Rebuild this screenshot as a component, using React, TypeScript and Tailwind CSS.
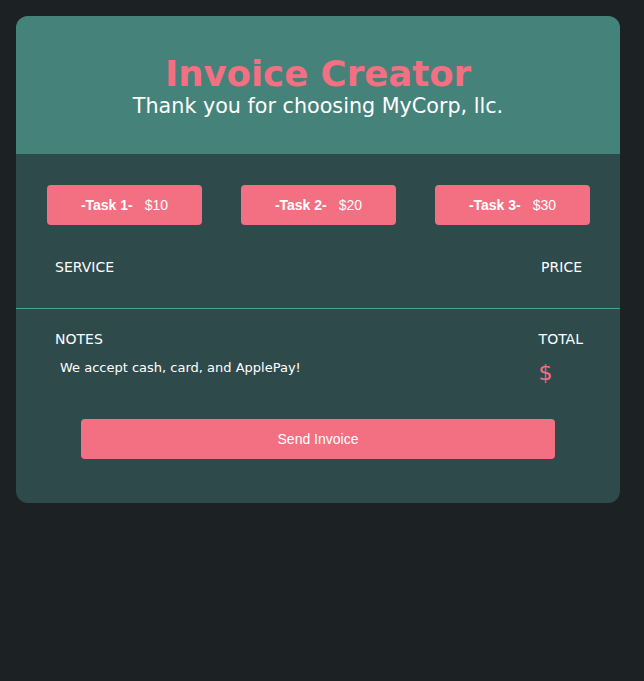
const tasks = [
  { label: "-Task 1-", price: "$10" },
  { label: "-Task 2-", price: "$20" },
  { label: "-Task 3-", price: "$30" },
];

export default function App() {
  return (
    <div className="min-h-[681px] bg-[#1c2224] p-4 font-['DejaVu_Sans',sans-serif]">
      <div className="w-[604px] overflow-hidden rounded-xl bg-[#2f4a4b]">
        <header className="flex h-[138px] flex-col items-center justify-center bg-[#45837a] pt-[2px]">
          <h1 className="text-[35.5px] leading-[40px] font-bold text-[#f27081]">Invoice Creator</h1>
          <p className="text-[20.7px] leading-6 text-white">Thank you for choosing MyCorp, llc.</p>
        </header>

        <div className="flex justify-between pr-[30px] pl-[31px] pt-[31px]">
          {tasks.map((t) => (
            <button
              key={t.label}
              className="flex h-10 w-[155px] items-center justify-center gap-3 rounded bg-[#f27081] font-['Liberation_Sans',sans-serif] text-sm text-white"
            >
              <span className="font-bold">{t.label}</span>
              <span>{t.price}</span>
            </button>
          ))}
        </div>

        <div className="flex justify-between pr-[38px] pl-[39px] pt-[32px] pb-[31px] text-sm text-white">
          <span>SERVICE</span>
          <span>PRICE</span>
        </div>

        <div className="h-px bg-[#3fa698]" />

        <div className="flex justify-between pr-[37px] pl-[39px] pt-[20px] text-sm text-white">
          <div>
            <div>NOTES</div>
            <div className="mt-[10px] pl-[5px] text-[13px]">We accept cash, card, and ApplePay!</div>
          </div>
          <div className="flex flex-col">
            <span>TOTAL</span>
            <span className="mt-[10px] text-[22px] leading-7 text-[#f27081]">$</span>
          </div>
        </div>

        <div className="flex justify-center pt-[32px] pb-[44px]">
          <button className="h-10 w-[474px] rounded bg-[#f27081] font-['Liberation_Sans',sans-serif] text-sm text-white">
            Send Invoice
          </button>
        </div>
      </div>
    </div>
  );
}
